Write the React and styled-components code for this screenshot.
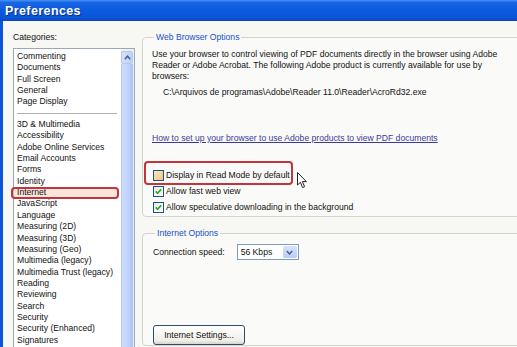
import React from 'react';
import styled, { createGlobalStyle } from 'styled-components';

const Global = createGlobalStyle`
    html, body {
        margin: 0;
        padding: 0;
        background: #f7f7f4;
    }
    #root {
        width: 517px;
        height: 347px;
        overflow: hidden;
    }
`;

const Window = styled.div`
    width: 517px;
    height: 347px;
    display: flex;
    flex-direction: column;
    font-family: "Liberation Sans", Arial, sans-serif;
    font-size: 8.6px;
    color: #111;
    overflow: hidden;
`;

const TitleBar = styled.div`
    height: 21px;
    flex-shrink: 0;
    display: flex;
    align-items: center;
    padding-left: 5px;
    background: linear-gradient(#4a92f5 0%, #1766e6 12%, #0b5ade 50%, #0a54d6 85%, #0845c0 100%);
    color: #fff;
    font-weight: 700;
    font-size: 12.5px;
    letter-spacing: 0.4px;
    text-shadow: 1px 1px 0 #0a2f8a;
`;

const Body = styled.div`
    flex: 1;
    display: flex;
    border-left: 3px solid #0a55d8;
    background: #f7f7f4;
    min-height: 0;
`;

const Sidebar = styled.div`
    width: 122px;
    flex-shrink: 0;
    padding: 10px 0 0 10px;
    display: flex;
    flex-direction: column;
`;

const Label = styled.div`
    line-height: 12px;
    height: 12px;
    margin-bottom: 5px;
`;

const ListBox = styled.div`
    flex: 1;
    display: flex;
    background: #fff;
    border: 1px solid #9aa8b8;
    border-bottom: none;
    min-height: 0;
`;

const List = styled.div`
    flex: 1;
    padding-top: 2px;
`;

const Item = styled.div`
    position: relative;
    height: 11.35px;
    line-height: 11.35px;
    padding-left: 3px;
    white-space: nowrap;

    ${p => p.$marked && `
        &::before {
            content: '';
            position: absolute;
            left: -3px;
            right: 2px;
            top: -0.5px;
            bottom: -1px;
            border: 2px solid #c3343c;
            border-radius: 4px;
            background: rgba(246, 210, 190, 0.55);
        }
    `}
    span {
        position: relative;
    }
`;

const Separator = styled.div`
    height: 11.35px;
    display: flex;
    align-items: center;
    padding: 0 4px 0 3px;

    &::after {
        content: '';
        flex: 1;
        height: 1px;
        background: #b0b0b0;
    }
`;

const ScrollBar = styled.div`
    width: 13px;
    flex-shrink: 0;
    display: flex;
    flex-direction: column;
    background: #f0f0ea;
`;

const ScrollButton = styled.div`
    height: 11px;
    margin: 2px 1px 0 0;
    border-radius: 2px;
    background: linear-gradient(90deg, #d4e0fc, #bcd0fa);
    border: 1px solid #b4c8f2;
    display: flex;
    align-items: center;
    justify-content: center;
`;

const ScrollThumb = styled.div`
    flex: 1;
    margin-right: 1px;
    background: linear-gradient(90deg, #cddcfd 0%, #bfd2fb 60%, #a8c0f4 100%);
    border-left: 1px solid #b8cbf4;
`;

const Main = styled.div`
    flex: 1;
    padding: 10px 0 0 7px;
    margin-right: -12px;
    display: flex;
    flex-direction: column;
`;

const Group = styled.fieldset`
    margin: ${p => p.$top || 0}px 0 0 0;
    padding: ${p => p.$pad || '6px 0 1px 9px'};
    border: 1px solid #d6d4c8;
    border-radius: 4px;
    background: #fafaf8;
    min-width: 0;

    legend {
        padding: 0 2px;
        margin-left: 2px;
        line-height: 12px;
        color: #2050c8;
    }
`;

const Paragraph = styled.p`
    margin: 0;
    line-height: 11px;
    white-space: nowrap;
`;

const Path = styled.div`
    margin: 5px 0 0 11px;
    line-height: 11px;
`;

const Link = styled.a`
    display: block;
    margin-top: 35px;
    line-height: 11px;
    color: #3a3a9c;
    text-decoration: underline;
`;

const CheckList = styled.div`
    margin-top: 23px;
    display: flex;
    flex-direction: column;
`;

const CheckRow = styled.label`
    position: relative;
    display: flex;
    align-items: center;
    width: fit-content;
    height: 16px;
    gap: 2px;
    padding-left: 1px;

    ${p => p.$marked && `
        &::after {
            content: '';
            position: absolute;
            left: -8px;
            right: -3px;
            top: -6px;
            bottom: -2px;
            border: 2px solid #c3343c;
            border-radius: 4px;
        }
    `}
`;

const Box = styled.span`
    width: 9px;
    height: 9px;
    border: 1px solid #1c5180;
    background: ${p => p.$hover ? 'linear-gradient(135deg, #fde9c2, #f4c27a)' : 'linear-gradient(135deg, #e9e9e2, #fff)'};
    display: flex;
    align-items: center;
    justify-content: center;
    flex-shrink: 0;
`;

const Cursor = styled.svg`
    position: absolute;
    left: calc(100% + 7px);
    top: 5px;
`;

const SpeedRow = styled.div`
    display: flex;
    align-items: center;
    height: 16px;
    gap: 12px;
`;

const Select = styled.div`
    width: 57px;
    height: 14px;
    border: 1px solid #7f9db9;
    background: #fff;
    display: flex;
    align-items: center;
    justify-content: space-between;
    padding-left: 3px;

    span:last-child {
        width: 14px;
        height: 12px;
        margin-right: 1px;
        border-radius: 2px;
        background: linear-gradient(#d8e3fc, #b9cdf7);
        display: flex;
        align-items: center;
        justify-content: center;
    }
`;

const Button = styled.button`
    margin-top: 65px;
    width: 92px;
    height: 20px;
    border: 1px solid #2d4a70;
    border-radius: 3px;
    background: linear-gradient(#ffffff, #f0efe8 80%, #d8d6cc);
    font: inherit;
    color: #111;
    padding: 0;
`;

const Tick = () => (
    <svg width="7" height="7" viewBox="0 0 7 7">
        <path d="M0.8 3.4 L2.6 5.2 L6.2 1.4" fill="none" stroke="#21a121" strokeWidth="1.6" />
    </svg>
);

const Chevron = ({ up }) => (
    <svg width="7" height="5" viewBox="0 0 7 5">
        <path d={up ? 'M0.8 4.2 L3.5 1.2 L6.2 4.2' : 'M0.8 1 L3.5 4 L6.2 1'} fill="none" stroke="#4d6185" strokeWidth="1.5" />
    </svg>
);

const categoriesTop = ['Commenting', 'Documents', 'Full Screen', 'General', 'Page Display'];
const categories = [
    '3D & Multimedia', 'Accessibility', 'Adobe Online Services', 'Email Accounts', 'Forms', 'Identity',
    'Internet', 'JavaScript', 'Language', 'Measuring (2D)', 'Measuring (3D)', 'Measuring (Geo)',
    'Multimedia (legacy)', 'Multimedia Trust (legacy)', 'Reading', 'Reviewing', 'Search', 'Security',
    'Security (Enhanced)', 'Signatures',
];

const App = () => {
    return (
        <Window>
            <Global />
            <TitleBar>Preferences</TitleBar>
            <Body>
                <Sidebar>
                    <Label>Categories:</Label>
                    <ListBox>
                        <List>
                            {categoriesTop.map(c => <Item key={c}><span>{c}</span></Item>)}
                            <Separator />
                            {categories.map(c => (
                                <Item key={c} $marked={c === 'Internet'}><span>{c}</span></Item>
                            ))}
                        </List>
                        <ScrollBar>
                            <ScrollButton><Chevron up /></ScrollButton>
                            <ScrollThumb />
                        </ScrollBar>
                    </ListBox>
                </Sidebar>
                <Main>
                    <Group>
                        <legend>Web Browser Options</legend>
                        <Paragraph>
                            Use your browser to control viewing of PDF documents directly in the browser using Adobe<br />
                            Reader or Adobe Acrobat. The following Adobe product is currently available for use by<br />
                            browsers:
                        </Paragraph>
                        <Path>C:\Arquivos de programas\Adobe\Reader 11.0\Reader\AcroRd32.exe</Path>
                        <Link>How to set up your browser to use Adobe products to view PDF documents</Link>
                        <CheckList>
                            <CheckRow $marked>
                                <Box $hover />
                                Display in Read Mode by default
                                <Cursor width="11" height="17" viewBox="0 0 11 17">
                                    <path d="M0.5 0.5 L0.5 13 L3.4 10.3 L5.6 15.6 L7.6 14.7 L5.4 9.6 L9.4 9.6 Z" fill="#fff" stroke="#222" strokeWidth="1" strokeLinejoin="round" />
                                </Cursor>
                            </CheckRow>
                            <CheckRow>
                                <Box><Tick /></Box>
                                Allow fast web view
                            </CheckRow>
                            <CheckRow>
                                <Box><Tick /></Box>
                                Allow speculative downloading in the background
                            </CheckRow>
                        </CheckList>
                    </Group>
                    <Group $top={10} $pad="5px 0 0 10px">
                        <legend>Internet Options</legend>
                        <SpeedRow>
                            Connection speed:
                            <Select>
                                <span>56 Kbps</span>
                                <span><Chevron /></span>
                            </Select>
                        </SpeedRow>
                        <Button>Internet Settings...</Button>
                    </Group>
                </Main>
            </Body>
        </Window>
    );
};

export default App;
